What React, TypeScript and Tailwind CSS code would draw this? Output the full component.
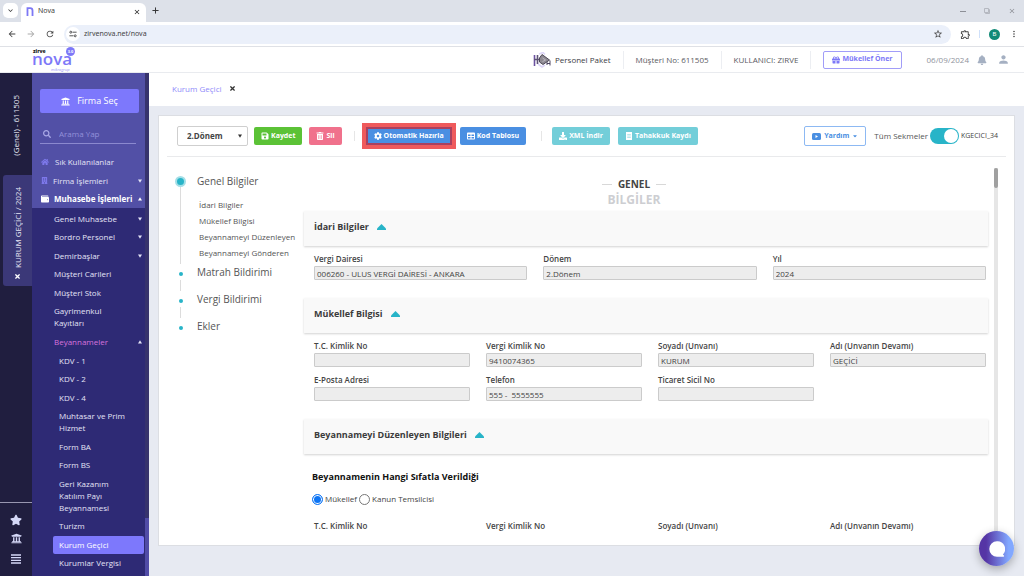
import type { ReactNode } from "react";
import {
  FaBell,
  FaBuilding,
  FaCaretDown,
  FaCog,
  FaDownload,
  FaGift,
  FaHome,
  FaSave,
  FaSearch,
  FaStar,
  FaTable,
  FaTimes,
  FaTrashAlt,
  FaUniversity,
  FaWallet,
} from "react-icons/fa";
import {
  MdArrowBack,
  MdArrowForward,
  MdClose,
  MdFilterNone,
  MdKeyboardArrowDown,
  MdMoreVert,
  MdOutlineExtension,
  MdPerson,
  MdRefresh,
  MdStarBorder,
} from "react-icons/md";

function BrowserChrome() {
  return (
    <div className="shrink-0 font-['Noto_Sans',sans-serif]">
      <div className="flex h-[22px] items-end bg-[#dde1e9] pl-[3px]">
        <button aria-label="Sekme ara" className="mb-1 flex size-[15px] items-center justify-center rounded-[5px] bg-white text-[#333]">
          <MdKeyboardArrowDown className="size-[9px]" />
        </button>
        <div className="ml-[3px] flex h-[19px] w-[125px] items-center rounded-t-[6px] bg-white pr-[5px] pb-[2px] pl-[5px] text-[7px] text-[#444]">
          <svg viewBox="0 0 8 10" className="h-[9px] w-2" fill="none" stroke="#7d78f5" strokeWidth="2">
            <path d="M1.2 10V1.2H4.2Q6.8 1.2 6.8 4V10" />
          </svg>
          <span className="ml-1 flex-1">Nova</span>
          <button aria-label="Sekmeyi kapat" className="flex">
            <MdClose className="size-[8px] text-[#222]" />
          </button>
        </div>
        <button aria-label="Yeni sekme" className="mb-2 ml-[6px] flex text-[#333]">
          <svg viewBox="0 0 8 8" className="size-[7px]" stroke="currentColor" strokeWidth="1.1">
            <path d="M4 .5v7M.5 4h7" />
          </svg>
        </button>
        <div className="mr-2 mb-[7px] ml-auto flex items-center gap-[18px] text-[#8d9097]">
          <svg viewBox="0 0 6 6" className="size-[6px]" stroke="currentColor">
            <path d="M0 3.5h6" />
          </svg>
          <MdFilterNone className="size-[6px] -scale-x-100" />
          <MdClose className="size-[8px]" />
        </div>
      </div>
      <div className="flex h-[25px] items-center border-b border-[#dfe1e6] bg-white pr-[5px] pl-[7px] text-[#444]">
        <button aria-label="Geri"><MdArrowBack className="size-[10px]" /></button>
        <button aria-label="İleri" className="ml-[9px] text-[#aaa]"><MdArrowForward className="size-[10px]" /></button>
        <button aria-label="Yenile" className="ml-[9px]"><MdRefresh className="size-[10px]" /></button>
        <div className="ml-[9px] flex h-[19px] flex-1 items-center rounded-full bg-[#ebf0fa] pr-2 pl-[2px]">
          <span className="flex size-[14px] items-center justify-center rounded-full bg-white">
            <svg viewBox="0 0 8 8" className="size-[8px]" fill="none" stroke="#444" strokeWidth="0.9">
              <circle cx="1.8" cy="2.2" r="1" />
              <path d="M3.6 2.2h4M.4 5.8h4" />
              <circle cx="6.2" cy="5.8" r="1" />
            </svg>
          </span>
          <span className="ml-1 flex-1 text-[7px] text-[#444]">zirvenova.net/nova</span>
          <MdStarBorder className="size-[10px]" />
        </div>
        <MdOutlineExtension className="ml-[9px] size-[11px]" />
        <span className="ml-2 h-2 w-px bg-[#cfe0fa]" />
        <span className="ml-[9px] flex size-[11px] items-center justify-center rounded-full bg-[#118a77] text-[6px] text-white">B</span>
        <MdMoreVert className="ml-[9px] size-[10px]" />
      </div>
    </div>
  );
}

function Divider() {
  return <span className="h-[18px] w-px bg-[#eceef2]" />;
}

function AppHeader() {
  return (
    <header className="flex h-[26px] shrink-0 items-center border-b border-[#e9ebef] bg-white pr-[14px] pl-8 text-[8px] text-[#5b5b63]">
      <svg viewBox="0 0 46 26" className="h-[26px] w-[46px]" fontFamily="'Open Sans', sans-serif">
        <text x="1" y="5.5" fontSize="5" fontWeight="800" fill="#222">zirve</text>
        <text x="0" y="18" fontSize="17" fontWeight="600" fill="#7d78f8">nova</text>
        <circle cx="38.5" cy="4.5" r="4.5" fill="#7d78f8" />
        <text x="38.5" y="6" fontSize="4" fontWeight="700" fill="#fff" textAnchor="middle">3.0</text>
        <text x="19" y="24" fontSize="4" fontStyle="italic" fill="#9a96f8">mikrogrup</text>
      </svg>
      <div className="ml-auto flex items-center">
        <svg viewBox="0 0 18 16" className="h-4 w-[18px]" fill="none">
          <path d="M6 2l4-1.500 2 2M5 12l4 3 3-2" stroke="#ddd6f8" strokeWidth="1.600" />
          <path d="M1.500 3v11" stroke="#6b51a0" strokeWidth="1.600" />
          <path d="M4.500 3v9M1 7.500h8" stroke="#5d5376" strokeWidth="1.600" />
          <path d="M9 2.500l7.500 5.500L10 12.500 6.500 10V6z" fill="#8d8991" stroke="#4f4a5a" />
          <path d="M9.500 6l3 2-3 1.600" stroke="#c4c0cc" strokeWidth=".8" />
          <path d="M14 10v3M17 8.500v5M14 11.500h3" stroke="#4c4460" />
        </svg>
        <span className="mr-3 ml-1 text-[#3c3c44]">Personel Paket</span>
        <Divider />
        <span className="mx-3">Müşteri No: 611505</span>
        <Divider />
        <span className="mx-3">KULLANICI: ZIRVE</span>
        <Divider />
        <button className="ml-3 flex h-[18px] items-center gap-[2px] rounded-[2px] border border-[#a19df8] px-2 text-[7px] font-bold text-[#7d78f8]">
          <FaGift className="size-[8px]" />
          Mükellef Öner
        </button>
        <span className="ml-[25px] text-[#8f939d]">06/09/2024</span>
        <button aria-label="Bildirimler" className="ml-2 text-[#a5b0c2]"><FaBell className="size-[10px]" /></button>
        <button aria-label="Profil" className="ml-[10px] text-[#a5b0c2]"><MdPerson className="size-[13px]" /></button>
      </div>
    </header>
  );
}

function Rail() {
  return (
    <aside className="flex w-8 shrink-0 flex-col bg-[#201e3f] text-[8px] font-medium text-[#e6e6f4]">
      <button className="flex h-[102px] items-center justify-center pt-[2px]">
        <span className="rotate-180 [writing-mode:vertical-rl]">(Genel) - 611505</span>
      </button>
      <div className="ml-[3px] flex h-[111px] flex-col items-center justify-between rounded-l-[3px] bg-[#3b3878] pt-3 pb-[6px]">
        <button className="rotate-180 [writing-mode:vertical-rl]">KURUM GEÇİCİ / 2024</button>
        <button aria-label="Firmayı kapat"><FaTimes className="size-[7px] text-white" /></button>
      </div>
      <div className="mt-auto flex h-[74px] flex-col items-center border-t border-[#9896b0] pt-[11px] text-[#d5d8f8]">
        <button aria-label="Favoriler"><FaStar className="size-3" /></button>
        <button aria-label="Firmalar" className="mt-[7px]"><FaUniversity className="size-[11px]" /></button>
        <button aria-label="Menü" className="mt-[10px]">
          <svg viewBox="0 0 10 10" className="size-[10px]" stroke="currentColor" strokeWidth="1.3">
            <path d="M0 1h10M0 3.7h10M0 6.3h10M0 9h10" />
          </svg>
        </button>
      </div>
    </aside>
  );
}

function Caret({ up = false }: { up?: boolean }) {
  return (
    <svg viewBox="0 0 4 4" className="h-1 w-1 shrink-0" fill="currentColor">
      {up ? <path d="M0 3.6h4L2 .2z" /> : <path d="M0 .4h4L2 3.8z" />}
    </svg>
  );
}

type Item = { label: string; caret?: "up" | "down"; accent?: boolean; active?: boolean };

const modules: Item[] = [
  { label: "Genel Muhasebe", caret: "down" },
  { label: "Bordro Personel", caret: "down" },
  { label: "Demirbaşlar", caret: "down" },
  { label: "Müşteri Carileri" },
  { label: "Müşteri Stok" },
  { label: "Gayrimenkul Kayıtları" },
  { label: "Beyannameler", caret: "up", accent: true },
];

const declarations: Item[] = [
  { label: "KDV - 1" },
  { label: "KDV - 2" },
  { label: "KDV - 4" },
  { label: "Muhtasar ve Prim Hizmet" },
  { label: "Form BA" },
  { label: "Form BS" },
  { label: "Geri Kazanım Katılım Payı Beyannamesi" },
  { label: "Turizm" },
  { label: "Kurum Geçici", active: true },
  { label: "Kurumlar Vergisi" },
];

function Sidebar() {
  return (
    <nav className="flex w-[117px] shrink-0 overflow-hidden bg-[#2e2a75] text-[8px] leading-3 font-medium text-[#e4e4f6]">
      <div className="min-w-0 flex-1">
        <div className="h-[135px] bg-[#5250a6] pt-4 pl-2">
          <button className="flex h-6 w-[99px] items-center justify-center gap-[7px] rounded-[2px] bg-[#7d78fc] text-[9px] text-white">
            <FaUniversity className="size-[9px]" />
            Firma Seç
          </button>
          <label className="mt-[11px] flex h-5 w-24 items-center gap-2 border-b border-[#8b89cf] pl-[3px] text-[#a9a8e6]">
            <FaSearch className="size-[8px] shrink-0" />
            <input aria-label="Arama Yap" placeholder="Arama Yap" className="w-full bg-transparent outline-none placeholder:text-[#9391da]" />
          </label>
          <ul className="mt-[8px]">
            <li className="flex h-[19px] items-center gap-[6px] pl-[1px]">
              <FaHome className="size-[8px] text-[#7d78ea]" />
              <a href="#sik">Sık Kullanılanlar</a>
            </li>
            <li className="flex h-[19px] items-center gap-[5px] pr-[3px] pl-[1px]">
              <FaBuilding className="size-[7px] text-[#7d78ea]" />
              <a href="#firma" className="flex-1">Firma İşlemleri</a>
              <Caret />
            </li>
            <li className="flex h-[18px] items-center gap-[5px] pr-[3px] pl-[1px] font-bold whitespace-nowrap text-white">
              <FaWallet className="size-[8px] shrink-0" />
              <a href="#muhasebe" className="min-w-0 flex-1">Muhasebe İşlemleri</a>
              <Caret up />
            </li>
          </ul>
        </div>
        <ul className="pt-[2px]">
          {modules.map((m) => (
            <li key={m.label} className="flex items-center pt-[3px] pr-[3px] pl-[22px] odd:pb-[3px] even:pb-[4px]">
              <a href="#modul" className={m.accent ? "w-[70px] text-[#d673dd]" : "w-[70px]"}>{m.label}</a>
              {m.caret && <span className="ml-auto"><Caret up={m.caret === "up"} /></span>}
            </li>
          ))}
        </ul>
        <ul className="pt-px pr-px pl-[21px]">
          {declarations.map((d) => (
            <li
              key={d.label}
              className={
                d.active
                  ? "rounded-[2px] bg-[#7d78fc] pt-[3px] pl-[6px] text-white odd:pb-[3px] even:pb-[4px]"
                  : "pt-[3px] pl-[6px] odd:pb-[3px] even:pb-[4px]"
              }
            >
              <a href="#beyanname" className="block w-[74px]">{d.label}</a>
            </li>
          ))}
        </ul>
      </div>
      <div className="flex w-1 flex-col justify-end bg-[#37336d]">
        <div className="h-[58px] bg-[#514ca6]" />
      </div>
    </nav>
  );
}

function ActionButton({ tone, icon, children }: { tone: string; icon: ReactNode; children: ReactNode }) {
  return (
    <button className={`flex h-[18px] items-center gap-[2px] rounded-[2px] px-[7px] text-[7px] font-bold whitespace-nowrap text-white ${tone}`}>
      {icon}
      {children}
    </button>
  );
}

function Toolbar() {
  return (
    <div className="mx-2 flex h-[41px] shrink-0 items-center border-b border-[#e9eaec] pr-2 pl-[10px] text-[8px]">
      <div className="relative">
        <select aria-label="Dönem seçimi" className="block h-5 w-[71px] appearance-none rounded-[2px] border border-[#cfcfcf] bg-white pl-[9px] font-bold text-[#444]">
          <option>2.Dönem</option>
        </select>
        <span className="pointer-events-none absolute top-2 right-[6px] text-[#333]"><Caret /></span>
      </div>
      <div className="ml-[6px] flex gap-[7px]">
        <ActionButton tone="bg-[#5bc236]" icon={<FaSave className="size-[8px]" />}>Kaydet</ActionButton>
        <ActionButton tone="bg-[#f0718c]" icon={<FaTrashAlt className="size-[8px]" />}>Sil</ActionButton>
      </div>
      <span className="ml-3 h-[10px] w-px bg-[#e6e6e6]" />
      <div className="ml-[7px] border-4 border-[#ef5a5c] bg-[#a9405f] p-[2px]">
        <button className="flex h-[14px] items-center gap-[2px] bg-[#4a8fe2] px-[6px] text-[7px] font-bold whitespace-nowrap text-white">
          <FaCog className="size-[8px]" />
          Otomatik Hazırla
        </button>
      </div>
      <div className="ml-1">
        <ActionButton tone="bg-[#4a8fe2]" icon={<FaTable className="size-[8px]" />}>Kod Tablosu</ActionButton>
      </div>
      <span className="ml-[15px] h-[10px] w-px bg-[#e6e6e6]" />
      <div className="ml-[10px] flex gap-2">
        <ActionButton tone="bg-[#73ced9]" icon={<FaDownload className="size-[8px]" />}>XML İndir</ActionButton>
        <ActionButton
          tone="bg-[#73ced9]"
          icon={
            <svg viewBox="0 0 8 8" className="size-[8px]" fill="currentColor">
              <path fillRule="evenodd" d="M1 0h6v8H1zM2.200 2v.6h3.600V2zm0 1.700v.6h3.600v-.6zm0 1.700v.6h3.600v-.6z" />
            </svg>
          }
        >
          Tahakkuk Kaydı
        </ActionButton>
      </div>
      <button className="ml-auto flex h-5 items-center gap-[3px] rounded-[2px] border border-[#8db9f3] px-[7px] text-[7px] font-bold text-[#4a8fe2]">
        <svg viewBox="0 0 9 7" className="h-[7px] w-[9px]" fill="currentColor">
          <rect width="9" height="7" rx="1.500" />
          <path d="M3.500 2v3L6 3.500z" fill="white" />
        </svg>
        Yardım
        <FaCaretDown className="size-[6px]" />
      </button>
      <label className="ml-2 flex items-center gap-[2px] text-[#555]">
        Tüm Sekmeler
        <input type="checkbox" defaultChecked className="peer sr-only" />
        <span className="flex h-4 w-[29px] items-center justify-end rounded-full bg-[#28b4c8] p-px">
          <span className="size-[14px] rounded-full bg-white" />
        </span>
      </label>
      <span className="ml-[2px] text-[7px] font-medium text-[#444]">KGECICI_34</span>
    </div>
  );
}

function StepDot({ active = false }: { active?: boolean }) {
  return active ? (
    <span className="size-[11px] rounded-full border-2 border-[#a4dfe7] bg-[#28b4c8]" />
  ) : (
    <span className="size-1 rounded-full bg-[#28b4c8]" />
  );
}

function Steps() {
  const rest = ["Matrah Bildirimi", "Vergi Bildirimi", "Ekler"];
  return (
    <ol className="w-[129px] shrink-0 pt-[16px] text-[10px] leading-4 text-[#555]">
      <li className="flex">
        <div className="flex w-[11px] flex-col items-center pt-[3px]">
          <StepDot active />
          <span className="w-px flex-1 bg-[#dcdcdc]" />
        </div>
        <div className="pl-[11px]">
          <a href="#genel">Genel Bilgiler</a>
          <ul className="pt-2 pb-[3px] pl-[2px] text-[8px] whitespace-nowrap">
            <li><a href="#idari">İdari Bilgiler</a></li>
            <li><a href="#mukellef">Mükellef Bilgisi</a></li>
            <li><a href="#duzenleyen">Beyannameyi Düzenleyen</a></li>
            <li><a href="#gonderen">Beyannameyi Gönderen</a></li>
          </ul>
        </div>
      </li>
      {rest.map((r, i) => (
        <li key={r} className="flex h-[27px]">
          <div className="flex w-[11px] flex-col items-center pt-2">
            <StepDot />
            {i < 2 && <span className="mt-1 w-px flex-1 bg-[#dcdcdc]" />}
          </div>
          <a href="#adim" className="pl-[11px]">{r}</a>
        </li>
      ))}
    </ol>
  );
}

function SectionHeader({ title }: { title: string }) {
  return (
    <h2 className="flex h-[35px] items-center gap-2 bg-[#f9f9f9] pb-[3px] pl-[10px] text-[9px] font-bold text-[#3c3c3c] shadow-[0_1px_2px_rgba(0,0,0,0.18)]">
      {title}
      <svg viewBox="0 0 9 6" className="h-[6px] w-[9px]" fill="#28b4c8">
        <path d="M4.5 0 9 4.6V6H0V4.6z" />
      </svg>
    </h2>
  );
}

function Field({ label, value = "" }: { label: string; value?: string }) {
  return (
    <label className="block font-semibold">
      {label}
      <input
        readOnly
        value={value}
        className="mt-px block h-[14px] w-full rounded-[1px] border border-[#cbcbcb] bg-[#ededed] px-[2px] font-normal text-[#444] outline-none"
      />
    </label>
  );
}

function FormArea() {
  return (
    <div className="min-w-0 flex-1 text-[8px] leading-3 text-[#444]">
      <div className="flex h-[54px] flex-col items-center pt-[19px] pr-6 font-bold">
        <h1 className="flex flex-col items-center leading-4">
          <span className="flex items-center gap-[6px] text-[10px]">
            <span className="h-px w-[10px] bg-[#d8d8d8]" />
            GENEL
            <span className="h-px w-[10px] bg-[#d8d8d8]" />
          </span>
          <span className="text-[12px] text-[#cdced2]">BİLGİLER</span>
        </h1>
      </div>
      <SectionHeader title="İdari Bilgiler" />
      <div className="mb-[18px] grid grid-cols-3 gap-4 pt-[7px] pr-[2px] pl-[10px]">
        <Field label="Vergi Dairesi" value="006260 - ULUS VERGİ DAİRESİ - ANKARA" />
        <Field label="Dönem" value="2.Dönem" />
        <Field label="Yıl" value="2024" />
      </div>
      <SectionHeader title="Mükellef Bilgisi" />
      <div className="mb-[18px] grid grid-cols-4 gap-x-4 gap-y-[7px] pt-[7px] pr-[2px] pl-[10px]">
        <Field label="T.C. Kimlik No" />
        <Field label="Vergi Kimlik No" value="9410074365" />
        <Field label="Soyadı (Unvanı)" value="KURUM" />
        <Field label="Adı (Unvanın Devamı)" value="GEÇİCİ" />
        <Field label="E-Posta Adresi" />
        <Field label="Telefon" value="555 -  5555555" />
        <Field label="Ticaret Sicil No" />
      </div>
      <SectionHeader title="Beyannameyi Düzenleyen Bilgileri" />
      <fieldset className="pt-[17px] pl-2">
        <legend className="float-left w-full text-[9px] font-bold text-[#111]">Beyannamenin Hangi Sıfatla Verildiği</legend>
        <div className="clear-both flex items-center gap-[2px] pt-[10px]">
          <label className="flex items-center gap-[2px]">
            <input
              type="radio"
              name="sifat"
              defaultChecked
              className="size-[11px] appearance-none rounded-full border border-[#1a7cf5] bg-[#0d75f5] shadow-[inset_0_0_0_1px_white]"
            />
            Mükellef
          </label>
          <label className="flex items-center gap-[2px]">
            <input type="radio" name="sifat" className="size-[11px] appearance-none rounded-full border border-[#777] bg-white" />
            Kanun Temsilcisi
          </label>
        </div>
      </fieldset>
      <div className="grid grid-cols-4 gap-x-4 pt-[15px] pr-[2px] pl-[10px]">
        <Field label="T.C. Kimlik No" />
        <Field label="Vergi Kimlik No" />
        <Field label="Soyadı (Unvanı)" />
        <Field label="Adı (Unvanın Devamı)" />
      </div>
    </div>
  );
}

export default function App() {
  return (
    <div className="relative flex h-screen flex-col overflow-hidden bg-white font-['Open_Sans',sans-serif]">
      <BrowserChrome />
      <AppHeader />
      <div className="flex min-h-0 flex-1">
        <Rail />
        <Sidebar />
        <main className="flex min-w-0 flex-1 flex-col bg-[#e7eaf2]">
          <div className="flex h-[33px] shrink-0 items-center gap-2 bg-white pb-[2px] pl-[23px] text-[8px]">
            <a href="#kurum" className="font-medium text-[#8f8bfa]">Kurum Geçici</a>
            <button aria-label="Sekmeyi kapat" className="flex"><FaTimes className="size-[7px] text-[#333]" /></button>
          </div>
          <section className="mx-[9px] mt-[9px] mb-[30px] flex min-h-0 flex-1 flex-col border border-[#dcdee3] bg-white">
            <Toolbar />
            <div className="mb-3 flex min-h-0 flex-1 overflow-hidden px-4">
              <Steps />
              <FormArea />
              <div className="mt-[11px] ml-[6px] w-1 shrink-0 bg-[#e6e6e6]">
                <div className="h-5 rounded-full bg-[#a0a0a0]" />
              </div>
            </div>
          </section>
        </main>
      </div>
      <button
        aria-label="Sohbet"
        className="absolute right-[10px] bottom-[10px] flex size-[35px] items-center justify-center rounded-full bg-linear-to-r from-[#5535a5] from-20% to-[#82a8ff] to-85% shadow-[0_3px_10px_rgba(0,0,0,0.3)]"
      >
        <svg viewBox="0 0 16 16" className="size-4" fill="white">
          <path d="M8 .3a7.7 7.7 0 1 0 0 15.4h6.4c.8 0 1-.8.5-1.3l-1-1A7.7 7.7 0 0 0 8 .3z" />
        </svg>
      </button>
    </div>
  );
}
